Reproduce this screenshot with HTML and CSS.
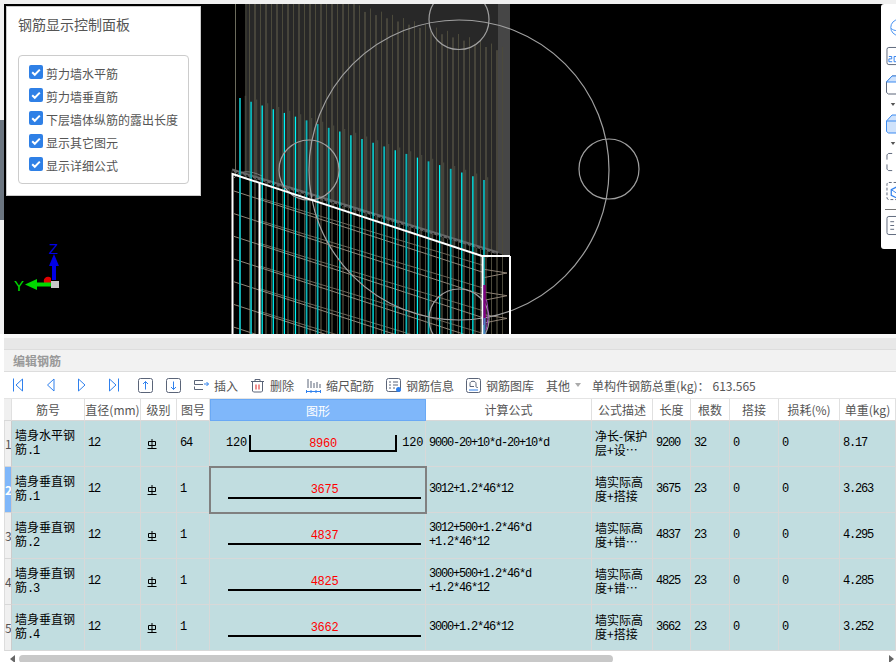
FILE: index.html
```html
<!DOCTYPE html>
<html lang="zh">
<head>
<meta charset="utf-8">
<title>编辑钢筋</title>
<link rel="stylesheet" href="styles.css">
</head>
<body>
<svg class="defs" width="0" height="0">
  <symbol id="lvl" viewBox="0 0 10 10"><path d="M1.500 2.500h7v4h-7zM5 0v9M0.500 9.500h9" fill="none" stroke="#000" stroke-width="1"/></symbol>
</svg>
<div class="top-strip"></div>
<main class="stage">
  <div class="left-strip"><div class="left-tab"></div></div>
  <section class="viewport">
    <svg id="scene" class="scene" viewBox="4 4 892 330" width="892" height="330"></svg>
    <aside class="control">
      <h1 class="control-title">钢筋显示控制面板</h1>
      <div class="control-group">
        <label class="check"><span class="box"><svg viewBox="0 0 14 14" width="14" height="14"><path d="M3.200 7.200l2.600 2.600 5-5.200" fill="none" stroke="#fff" stroke-width="2"/></svg></span>剪力墙水平筋</label>
        <label class="check"><span class="box"><svg viewBox="0 0 14 14" width="14" height="14"><path d="M3.200 7.200l2.600 2.600 5-5.200" fill="none" stroke="#fff" stroke-width="2"/></svg></span>剪力墙垂直筋</label>
        <label class="check"><span class="box"><svg viewBox="0 0 14 14" width="14" height="14"><path d="M3.200 7.200l2.600 2.600 5-5.200" fill="none" stroke="#fff" stroke-width="2"/></svg></span>下层墙体纵筋的露出长度</label>
        <label class="check"><span class="box"><svg viewBox="0 0 14 14" width="14" height="14"><path d="M3.200 7.200l2.600 2.600 5-5.200" fill="none" stroke="#fff" stroke-width="2"/></svg></span>显示其它图元</label>
        <label class="check"><span class="box"><svg viewBox="0 0 14 14" width="14" height="14"><path d="M3.200 7.200l2.600 2.600 5-5.200" fill="none" stroke="#fff" stroke-width="2"/></svg></span>显示详细公式</label>
      </div>
    </aside>
    <nav class="rail">
      <svg class="rail-icon" viewBox="0 0 20 20"><circle cx="13" cy="10" r="8.500" fill="none" stroke="#3c8bf0" stroke-width="1"/><path d="M5 11c3 3 8 3 14 0" fill="none" stroke="#3c8bf0"/></svg>
      <svg class="rail-icon" viewBox="0 0 20 20"><rect x="0.500" y="0.500" width="24" height="18" rx="2" fill="none" stroke="#5a6478"/><path d="M2.500 10h3v2.500h-3v3h3.500M8 10v5.500h2l2-1.500v-3l-2-1H8" fill="none" stroke="#2f80ed"/></svg>
      <svg class="rail-icon tall first-cube" viewBox="0 0 20 20"><path d="M0.500 7L6 1h20v18H2.500l-2-1.500z" fill="none" stroke="#5a6478"/><path d="M0.500 7L6 1h20v6z" fill="#cfe2fb" stroke="#3c8bf0"/></svg>
      <svg class="rail-caret" viewBox="0 0 6 4"><path d="M0 0h6L3 4z" fill="#555"/></svg>
      <svg class="rail-icon tall" viewBox="0 0 20 20"><path d="M0.500 7L6 1h20v18H2.500l-2-1.500z" fill="#cfe2fb" stroke="#3c8bf0"/><path d="M0.500 7H26" fill="none" stroke="#3c8bf0"/></svg>
      <svg class="rail-caret" viewBox="0 0 6 4"><path d="M0 0h6L3 4z" fill="#555"/></svg>
      <svg class="rail-icon" viewBox="0 0 20 20"><path d="M6 0.500H2l-1.500 1.500v5M0.500 12v5l1.500 1.500h4" fill="none" stroke="#5a6478"/></svg>
      <svg class="rail-icon" viewBox="0 0 20 20"><rect x="0.500" y="0.500" width="24" height="18" rx="2" fill="none" stroke="#5a6478" stroke-dasharray="3 2"/><path d="M11 5L5 8v6l6 3" fill="none" stroke="#2f80ed" stroke-width="1.300"/><path d="M5 8l6 4" stroke="#2f80ed"/></svg>
      <div class="rail-sep"></div>
      <svg class="rail-icon" viewBox="0 0 20 20"><rect x="0.500" y="0.500" width="24" height="19" rx="2" fill="none" stroke="#5a6478"/><path d="M4 6h4M4 10h4M4 14h4M10 6h8M10 10h8M10 14h8" fill="none" stroke="#5a6478"/></svg>
    </nav>
    <div class="sash"></div>
  </section>
</main>

<section class="editor">
  <div class="editor-band"></div>
  <h2 class="editor-title">编辑钢筋</h2>
  <div class="toolbar">
    <div class="nav-group">
      <svg class="nav-icon" viewBox="0 0 12 16"><path d="M1.500 1.500v13M10.500 2L4 8l6.500 6z" fill="none" stroke="#2f80ed"/></svg>
      <svg class="nav-icon" viewBox="0 0 12 16"><path d="M10 2L3.500 8l6.500 6z" fill="none" stroke="#2f80ed"/></svg>
      <svg class="nav-icon" viewBox="0 0 12 16"><path d="M2.500 2L9 8l-6.500 6z" fill="none" stroke="#2f80ed"/></svg>
      <svg class="nav-icon" viewBox="0 0 12 16"><path d="M10.500 1.500v13M1.500 2L8 8l-6.500 6z" fill="none" stroke="#2f80ed"/></svg>
    </div>
    <div class="move-group">
      <svg class="move-icon" viewBox="0 0 15 15"><rect x="0.500" y="0.500" width="14" height="14" rx="2" fill="none" stroke="#5a6478"/><path d="M7.500 11.500v-8M5 6l2.500-2.500L10 6" fill="none" stroke="#2f80ed"/></svg>
      <svg class="move-icon" viewBox="0 0 15 15"><rect x="0.500" y="0.500" width="14" height="14" rx="2" fill="none" stroke="#5a6478"/><path d="M7.500 3.500v8M5 9l2.500 2.500L10 9" fill="none" stroke="#2f80ed"/></svg>
    </div>
    <div class="tools">
      <div class="tool"><svg class="tool-icon" viewBox="0 0 15 15"><path d="M9 2.500H0.500v4H9M0.500 8.500v3H9" fill="none" stroke="#5a6478"/><path d="M10 6h4.500M12.500 4l2 2-2 2" fill="none" stroke="#2f80ed"/></svg>插入</div>
      <div class="tool"><svg class="tool-icon" viewBox="0 0 15 15"><path d="M1 3.500h13M5 3.500v-2h5v2M2.500 3.500v9.500l1 1h8l1-1V3.500" fill="none" stroke="#5a6478"/><path d="M6 6.500v5M9 6.500v5" fill="none" stroke="#e02020"/></svg>删除</div>
      <div class="tool"><svg class="tool-icon" viewBox="0 0 15 15"><path d="M2 1v9M5 3v7M8 5v5M11 4v6M14 6v4" fill="none" stroke="#5a6478"/><path d="M0.500 13.500h14M0.500 12v3M5 12v3M10 12v3M14.500 12v3" fill="none" stroke="#2f80ed"/></svg>缩尺配筋</div>
      <div class="tool"><svg class="tool-icon" viewBox="0 0 15 15"><rect x="0.500" y="0.500" width="14" height="13" rx="2" fill="none" stroke="#5a6478"/><path d="M3 4h2M7 4h5M3 7h2M7 7h5M3 10h2M7 10h2" fill="none" stroke="#5a6478"/><circle cx="12.500" cy="11.500" r="2.500" fill="#2f80ed"/></svg>钢筋信息</div>
      <div class="tool"><svg class="tool-icon" viewBox="0 0 15 15"><rect x="0.500" y="0.500" width="14" height="14" rx="2" fill="none" stroke="#5a6478"/><path d="M4 5.500c0-3 6-3 6 0v3c0 1 1 1 2 1M4 5.500v3h4" fill="none" stroke="#5a6478"/><path d="M3 12h9" stroke="#2f80ed"/></svg>钢筋图库</div>
      <div class="tool">其他<svg class="caret" viewBox="0 0 6 4"><path d="M0 0h6L3 4z" fill="#aaa"/></svg></div>
      <div class="total">单构件钢筋总重(kg)：<span class="total-val">613.565</span></div>
    </div>
  </div>

  <table class="grid">
    <colgroup>
      <col class="c-idx"><col class="c-name"><col class="c-dia"><col class="c-lvl"><col class="c-fig"><col class="c-shape"><col class="c-formula"><col class="c-desc"><col class="c-len"><col class="c-cnt"><col class="c-lap"><col class="c-loss"><col class="c-wt">
    </colgroup>
    <thead>
      <tr>
        <th class="idx"></th><th>筋号</th><th>直径(mm)</th><th>级别</th><th>图号</th><th class="active">图形</th><th>计算公式</th><th>公式描述</th><th>长度</th><th>根数</th><th>搭接</th><th>损耗(%)</th><th>单重(kg)</th>
      </tr>
    </thead>
    <tbody>
      <tr>
        <td class="idx">1</td><td class="name">墙身水平钢筋<span class="num">.1</span></td><td class="num">12</td><td><svg class="lvl"><use href="#lvl"/></svg></td><td class="num">64</td>
        <td class="shape"><div class="bent"><span class="num side">120</span><div class="bracket"><span class="dim">8960</span></div><span class="num side">120</span></div></td>
        <td class="num">9000-20+10*d-20+10*d</td><td class="desc">净长-保护层+设⋯</td><td class="num">9200</td><td class="num">32</td><td class="num">0</td><td class="num">0</td><td class="num">8.17</td>
      </tr>
      <tr>
        <td class="idx selected">2</td><td class="name">墙身垂直钢筋<span class="num">.1</span></td><td class="num">12</td><td><svg class="lvl"><use href="#lvl"/></svg></td><td class="num">1</td>
        <td class="shape focus"><div class="straight"><span class="dim">3675</span></div></td>
        <td class="num">3012+1.2*46*12</td><td class="desc">墙实际高度+搭接</td><td class="num">3675</td><td class="num">23</td><td class="num">0</td><td class="num">0</td><td class="num">3.263</td>
      </tr>
      <tr>
        <td class="idx">3</td><td class="name">墙身垂直钢筋<span class="num">.2</span></td><td class="num">12</td><td><svg class="lvl"><use href="#lvl"/></svg></td><td class="num">1</td>
        <td class="shape"><div class="straight"><span class="dim">4837</span></div></td>
        <td class="num">3012+500+1.2*46*d<br>+1.2*46*12</td><td class="desc">墙实际高度+错⋯</td><td class="num">4837</td><td class="num">23</td><td class="num">0</td><td class="num">0</td><td class="num">4.295</td>
      </tr>
      <tr>
        <td class="idx">4</td><td class="name">墙身垂直钢筋<span class="num">.3</span></td><td class="num">12</td><td><svg class="lvl"><use href="#lvl"/></svg></td><td class="num">1</td>
        <td class="shape"><div class="straight"><span class="dim">4825</span></div></td>
        <td class="num">3000+500+1.2*46*d<br>+1.2*46*12</td><td class="desc">墙实际高度+错⋯</td><td class="num">4825</td><td class="num">23</td><td class="num">0</td><td class="num">0</td><td class="num">4.285</td>
      </tr>
      <tr>
        <td class="idx">5</td><td class="name">墙身垂直钢筋<span class="num">.4</span></td><td class="num">12</td><td><svg class="lvl"><use href="#lvl"/></svg></td><td class="num">1</td>
        <td class="shape"><div class="straight"><span class="dim">3662</span></div></td>
        <td class="num">3000+1.2*46*12</td><td class="desc">墙实际高度+搭接</td><td class="num">3662</td><td class="num">23</td><td class="num">0</td><td class="num">0</td><td class="num">3.252</td>
      </tr>
    </tbody>
  </table>

  <div class="hscroll">
    <svg class="arrow" viewBox="0 0 5 8"><path d="M5 0v8L0 4z" fill="#666"/></svg>
    <div class="thumb"></div>
    <svg class="arrow right" viewBox="0 0 5 8"><path d="M0 0v8l5-4z" fill="#666"/></svg>
  </div>
</section>
<script src="scene.js"></script>
</body>
</html>
```

FILE: styles.css
```css
* { box-sizing: border-box; }
html, body { margin: 0; padding: 0; }
body {
  width: 896px;
  height: 662px;
  overflow: hidden;
  background: #fff;
  font-family: "Noto Sans CJK SC", "Liberation Sans", sans-serif;
  font-size: 12px;
  color: #555;
}
.defs { position: absolute; }
.top-strip { height: 4px; background: #f0f0f0; }
.stage { display: flex; height: 330px; }
.left-strip { position: relative; width: 4px; background: #f0f0f0; }
.left-tab { position: absolute; left: 0; top: 116px; width: 4px; height: 100px; background: #6b7580; }
.viewport { position: relative; width: 892px; height: 330px; background: #000; }
.scene { display: block; }

.control {
  position: absolute;
  left: 2px;
  top: 2px;
  width: 195px;
  height: 190px;
  padding: 8px 12px 0 11px;
  background: #fff;
  border: 1px solid #ccc;
}
.control-title {
  margin: 0 0 21px;
  font-size: 14px;
  font-weight: 400;
  line-height: 19px;
  color: #555;
}
.control-group {
  display: flex;
  flex-direction: column;
  gap: 5px;
  width: 171px;
  height: 129px;
  padding: 8px 0 0 10px;
  border: 1px solid #ccc;
  border-radius: 4px;
}
.check { display: flex; align-items: center; gap: 3px; height: 18px; font-size: 12px; color: #555; white-space: nowrap; }
.box { width: 14px; height: 14px; margin-top: -2px; border-radius: 2px; background: #2f80e6; display: block; flex: none; }
.box svg { display: block; }

.rail {
  position: absolute;
  right: 0;
  top: 0;
  width: 15px;
  height: 245px;
  padding: 14px 0 0 5px;
  background: #fff;
  border-radius: 3px 0 0 3px;
  overflow: hidden;
  display: flex;
  flex-direction: column;
  align-items: flex-start;
  gap: 10px;
}
.rail-icon { width: 20px; height: 19px; flex: none; overflow: visible; }
.rail-icon.tall { height: 20px; }
.rail-icon.first-cube { margin-top: -1px; }
.rail-caret { width: 6px; height: 3px; flex: none; margin: -2px 0 -2px 4px; }
.rail-sep { width: 12px; height: 1px; margin: -2px 0 -4px -1px; background: #777; flex: none; }
.sash { position: absolute; left: 406px; bottom: -4px; width: 100px; height: 4px; background: #6b7580; }

.editor { position: relative; }
.editor-band { height: 16px; margin-left: 4px; border-top: 4px solid #f8f8f8; border-bottom: 1px solid #ddd; background: #e8e8e8; }
.editor-title {
  height: 22px;
  margin: 0 0 0 4px;
  padding-left: 9px;
  font-size: 12px;
  font-weight: 700;
  line-height: 21px;
  color: #999;
  background: #f2f2f2;
  border-bottom: 1px solid #ddd;
}
.toolbar { display: flex; align-items: center; height: 27px; margin-left: 4px; padding-left: 8px; border-bottom: 1px solid #e4e4e4; background: #fff; }
.nav-group { display: flex; gap: 20px; }
.nav-icon { width: 12px; height: 16px; display: block; }
.move-group { display: flex; gap: 13px; margin-left: 18px; }
.move-icon { width: 15px; height: 15px; display: block; }
.tools { display: flex; align-items: center; gap: 12px; margin-left: 13px; }
.tool { display: flex; align-items: center; gap: 5px; white-space: nowrap; }
.tool-icon { width: 15px; height: 15px; display: block; }
.caret { width: 6px; height: 4px; }
.total { margin-left: -1px; white-space: nowrap; }
.total-val { margin-left: 3px; }

.grid { table-layout: fixed; width: 892px; margin-left: 4px; border-collapse: separate; border-spacing: 0; }
.c-idx { width: 8px; } .c-name { width: 73px; } .c-dia { width: 56px; } .c-lvl { width: 36px; } .c-fig { width: 33px; }
.c-shape { width: 216px; } .c-formula { width: 166px; } .c-desc { width: 61px; } .c-len { width: 38px; }
.c-cnt { width: 39px; } .c-lap { width: 49px; } .c-loss { width: 61px; } .c-wt { width: 56px; }
.grid th {
  height: 22px;
  padding: 0;
  font-weight: 400;
  font-size: 12px;
  color: #555;
  background: #fff;
  border-right: 1px solid #e0e0e0;
  border-bottom: 1px solid #d8d8d8;
  white-space: nowrap;
  overflow: hidden;
}
.grid th.active { background: #7fb7fa; color: #fff; border: 1px solid #6aa9f5; }
.grid th.idx { background: #f0f0f0; }
.grid td {
  height: 46px;
  padding: 0 0 2px 3px;
  background: #c1dde0;
  border-right: 1px solid #d8d8d8;
  border-bottom: 1px solid #d8d8d8;
  color: #000;
  vertical-align: middle;
  line-height: 14px;
}
.grid td.idx {
  padding: 0;
  background: #f0f0f0;
  border-left: 1px solid #ddd;
  border-right: 1px solid #ccc;
  color: #555;
  font-size: 12px;
  text-align: center;
  overflow: hidden;
}
.grid td.idx.selected { background: #7fb7fa; color: #fff; font-weight: 700; }
.num { font-family: "Liberation Mono", "DejaVu Sans Mono", monospace; font-size: 12px; letter-spacing: -1.2px; }
.grid td.name { padding: 0 8px 2px 3px; }
.grid td.desc { padding: 0 3px 2px 3px; }
.lvl { display: block; width: 10px; height: 10px; margin: 3px 0 0 3px; }
.grid td.shape { padding: 0; }
.grid td.shape.focus { outline: 2px solid #808080; outline-offset: -1px; }
.dim { color: #f00; font-family: "Liberation Mono", monospace; letter-spacing: -0.3px; font-size: 12px; line-height: 14px; }
.straight { width: 193px; margin: 0 0 0 18px; height: 19px; padding-top: 1px; border-bottom: 2px solid #000; text-align: center; }
.bent { display: flex; align-items: flex-start; padding: 0 0 0 16px; }
.side { line-height: 14px; margin-top: 1px; width: 23px; letter-spacing: -0.2px; }
.bracket { width: 151px; height: 17px; border: 2px solid #000; border-top: 0; text-align: center; margin-right: 5px; }
.hscroll { position: absolute; left: 4px; right: 0; top: 318px; height: 10px; background: #fff; }
.thumb { position: absolute; left: 15px; top: 3px; width: 594px; height: 8px; border-radius: 4px; background: #c8c8c8; }
.arrow { position: absolute; left: 6px; top: 3px; width: 5px; height: 8px; }
.arrow.right { left: auto; right: 2px; }
```

FILE: scene.js
```js
(function () {
  var NS = 'http://www.w3.org/2000/svg';
  var svg = document.getElementById('scene');
  function el(name, attrs, text) {
    var e = document.createElementNS(NS, name);
    for (var k in attrs) e.setAttribute(k, attrs[k]);
    if (text) e.textContent = text;
    svg.appendChild(e);
    return e;
  }
  function path(d, stroke, w, extra) {
    var a = { d: d, stroke: stroke, 'stroke-width': w, fill: 'none' };
    for (var k in extra || {}) a[k] = extra[k];
    return el('path', a);
  }
  function slope(x) { return 174 + (x - 232) * 0.328; }

  // wall body seen behind the rebar
  el('polygon', { points: '247,4 498,4 498,252 247,176', fill: '#282828' });
  el('polygon', { points: '498,4 510,4 510,257 498,253', fill: '#464646' });

  // distributed rebar, olive
  var a = '', b = '';
  for (var i = 0, x = 249.5; x < 508; x += 5.5, i++) {
    var top = x < 355 ? 4 : 4 + 0.29 * (x - 355) + (i % 2 ? 5 : 0);
    var d = 'M' + x + ' ' + top + 'V334';
    if (i % 2) a += d; else b += d;
  }
  path(a, '#66634f', 1);
  path(b, '#4c4a3b', 1);
  path('M235.500 4V174M246 4V178', '#6b6b5c', 1);

  // short stubs just above the wall
  var stubs = '';
  for (var sx = 245.500; sx < 492; sx += 11) {
    var st = 98 + (sx - 240) * 0.336 - 4;
    stubs += 'M' + sx + ' ' + st + 'V' + slope(sx);
  }
  path(stubs, '#44443b', 1.500);

  // fuzzy seam above the wall edge
  path('M232 170L498 253', '#666', 3);
  path('M232 171L498 254', '#111', 1, { 'stroke-dasharray': '2 3' });

  // horizontal mesh
  var m1 = '', m2 = '';
  for (var y = 191; y < 360; y += 22.700) {
    m1 += 'M234 ' + y + 'L482 ' + (y + 81);
    m2 += 'M260 ' + (y + 7) + 'L482 ' + (y + 74);
    m1 += 'M482 ' + (y + 78) + 'L507 ' + (y + 82) + 'L482 ' + (y + 87);
  }
  path(m1, '#8f8376', 1);
  path(m2, '#6e6558', 1);
  var g = '';
  for (var gx = 240; gx < 259; gx += 11) g += 'M' + gx + ' ' + slope(gx) + 'V334';
  path(g, '#aaa', 1);
  path('M234 178C240 170 250 170 262 176', '#777', 1);

  // cyan vertical rebar
  var dim = { 0: 1, 1: 1, 6: 1, 7: 1, 8: 1, 13: 1, 15: 1, 17: 1, 19: 1, 22: 1 };
  for (var c = 0; c < 23; c++) {
    var cx = 240 + c * 11.090;
    var ct = 98 + (cx - 240) * 0.336;
    path('M' + cx + ' ' + ct + 'V334', dim[c] ? '#0cb4b8' : '#00f6f6', dim[c] ? 1.800 : 1.300);
  }

  // circles
  function circle(cx, cy, r) {
    el('circle', { cx: cx, cy: cy, r: r, fill: 'none', stroke: '#a0a0a0', 'stroke-width': 1.200 });
  }
  circle(459, 170, 150);
  circle(459, 19.500, 30);
  circle(609, 169, 30);
  circle(309, 170, 30);
  circle(459, 319, 30);

  // wall outline
  path('M232.500 334V174L482 256H510', '#fff', 2);
  path('M259.500 183V334M482.500 256V334M510 256V334', '#fff', 2);

  // tail of the detail rebar
  path('M484.500 285V325', '#800080', 2.500);
  path('M484.500 318V334', '#4a80c0', 2);
  path('M486.500 300C489 310 488 322 486 330', '#a040c0', 1);

  // axis gizmo
  el('text', { x: 49, y: 254, fill: '#0000e6', 'font-family': 'Liberation Sans', 'font-size': 15 }, 'Z');
  el('text', { x: 14, y: 291, fill: '#00e000', 'font-family': 'Liberation Sans', 'font-size': 15 }, 'Y');
  path('M54 280V264', '#0000e6', 4);
  el('polygon', { points: '54,254 49,266 59,266', fill: '#0000e6' });
  el('path', { d: 'M51 278a4 4 0 0 0 -6 6h6z', fill: '#e00000' });
  path('M52 284.500H36', '#00d800', 4);
  el('polygon', { points: '25,284.500 37,279 37,290', fill: '#00d800' });
  el('rect', { x: 51, y: 281, width: 8, height: 7, fill: '#c8c8c8' });
})();
```
